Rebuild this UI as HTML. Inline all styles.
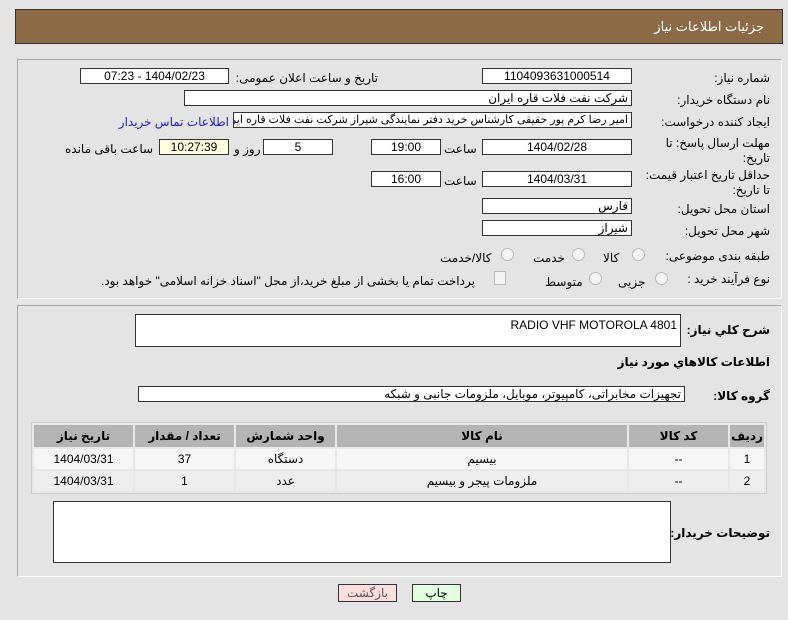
<!DOCTYPE html>
<html><head><meta charset="utf-8"><style>
body{margin:0;width:788px;height:620px;background:#e4e4e4;font-family:"Liberation Sans","DejaVu Sans",sans-serif;font-size:12px;position:relative;overflow:hidden;color:#000}
.a{position:absolute}
.hdr{left:15px;top:9px;width:766px;height:33px;background:#8b6a44;border:1px solid #333}
.hdr span{position:absolute;right:18px;top:9px;color:#fff;font-size:13px}
.pn{border:1px solid #aaa;border-right-color:#fff;border-bottom-color:#fff}
.bx{background:#fff;border:1px solid #333;height:16px;line-height:15px;direction:rtl;text-align:center;box-sizing:border-box;font-size:12px;overflow:hidden;white-space:nowrap}
.l{direction:rtl;text-align:right;white-space:nowrap;font-size:12px}
.rd{width:11px;height:11px;border-radius:50%;border:1px solid #bbb;background:#f4f4f4}
table{border-collapse:separate;border-spacing:2px;background:#e8e8e8;border:1px solid #ccc;direction:rtl}
td,th{padding:0;text-align:center;font-size:12px}
th{background:#b4b4b4;font-weight:bold;height:22px}
td{height:20px}
tr.r1 td{background:#f6f6f6}tr.r2 td{background:#eeeeee}
.btn{border:1px solid #333;height:18px;box-sizing:border-box;text-align:center;line-height:16px;font-size:12px}
.b{font-weight:bold;font-size:12px}
</style></head><body>
<div class="a hdr"><span>جزئیات اطلاعات نیاز</span></div>
<div class="a pn" style="left:17px;top:59px;width:763px;height:238px"></div>
<div class="a l" style="right:18px;top:71px">شماره نیاز:</div>
<div class="a bx" style="left:482px;top:68px;width:150px">1104093631000514</div>
<div class="a l" style="right:410px;top:71px">تاریخ و ساعت اعلان عمومی:</div>
<div class="a bx" style="left:80px;top:68px;width:149px">1404/02/23 - 07:23</div>
<div class="a l" style="right:18px;top:93px">نام دستگاه خریدار:</div>
<div class="a bx" style="left:184px;top:90px;width:448px;text-align:right;padding-right:3px">شرکت نفت فلات قاره ایران</div>
<div class="a l" style="right:18px;top:115px">ایجاد کننده درخواست:</div>
<div class="a bx" style="left:233px;top:112px;width:399px;text-align:right;padding-right:3px;font-size:11px">امیر رضا کرم پور حقیقی کارشناس خرید دفتر نمایندگی شیراز شرکت نفت فلات قاره ایران</div>
<div class="a l" style="right:559px;top:115px;color:#2222cc">اطلاعات تماس خریدار</div>
<div class="a l" style="right:18px;top:136px;line-height:15px">مهلت ارسال پاسخ: تا<br>تاریخ:</div>
<div class="a bx" style="left:482px;top:139px;width:150px">1404/02/28</div>
<div class="a l" style="left:444px;top:142px">ساعت</div>
<div class="a bx" style="left:371px;top:139px;width:70px">19:00</div>
<div class="a bx" style="left:263px;top:139px;width:70px">5</div>
<div class="a l" style="left:234px;top:142px">روز و</div>
<div class="a bx" style="left:159px;top:139px;width:70px;background:#ffffe0">10:27:39</div>
<div class="a l" style="left:65px;top:142px">ساعت باقی مانده</div>
<div class="a l" style="right:18px;top:168px;line-height:15px">حداقل تاریخ اعتبار قیمت:<br>تا تاریخ:</div>
<div class="a bx" style="left:482px;top:171px;width:150px">1404/03/31</div>
<div class="a l" style="left:444px;top:174px">ساعت</div>
<div class="a bx" style="left:371px;top:171px;width:70px">16:00</div>
<div class="a l" style="right:18px;top:202px">استان محل تحویل:</div>
<div class="a bx" style="left:482px;top:198px;width:150px;text-align:right;padding-right:3px">فارس</div>
<div class="a l" style="right:18px;top:224px">شهر محل تحویل:</div>
<div class="a bx" style="left:482px;top:220px;width:150px;text-align:right;padding-right:3px">شیراز</div>
<div class="a l" style="right:18px;top:249px">طبقه بندی موضوعی:</div>
<div class="a rd" style="left:632px;top:248px"></div><div class="a l" style="left:603px;top:251px">کالا</div>
<div class="a rd" style="left:572px;top:248px"></div><div class="a l" style="left:533px;top:251px">خدمت</div>
<div class="a rd" style="left:501px;top:248px"></div><div class="a l" style="left:440px;top:251px">کالا/خدمت</div>
<div class="a l" style="right:18px;top:272px">نوع فرآیند خرید :</div>
<div class="a rd" style="left:655px;top:272px"></div><div class="a l" style="left:618px;top:275px">جزیی</div>
<div class="a rd" style="left:589px;top:272px"></div><div class="a l" style="left:545px;top:275px">متوسط</div>
<div class="a" style="left:494px;top:271px;width:10px;height:12px;border:1px solid #bbb;background:#f4f4f4"></div>
<div class="a l" style="left:101px;top:274px">پرداخت تمام یا بخشی از مبلغ خرید،از محل "اسناد خزانه اسلامی" خواهد بود.</div>

<div class="a pn" style="left:17px;top:305px;width:763px;height:270px"></div>
<div class="a l b" style="right:18px;top:323px">شرح کلي نياز:</div>
<div class="a" style="left:135px;top:314px;width:546px;height:33px;background:#fff;border:1px solid #333;box-sizing:border-box;direction:ltr;text-align:right;padding:3px 3px;font-size:12px">RADIO VHF MOTOROLA 4801</div>
<div class="a l b" style="right:18px;top:355px">اطلاعات کالاهاي مورد نياز</div>
<div class="a l b" style="right:18px;top:389px">گروه کالا:</div>
<div class="a bx" style="left:138px;top:386px;width:547px;text-align:right;padding-right:3px">تجهیزات مخابراتی، کامپیوتر، موبایل، ملزومات جانبی و شبکه</div>
<table class="a" style="left:31px;top:422px;width:736px">
<tr><th style="width:34px">ردیف</th><th style="width:99px">کد کالا</th><th>نام کالا</th><th style="width:99px">واحد شمارش</th><th style="width:99px">تعداد / مقدار</th><th style="width:99px">تاریخ نیاز</th></tr>
<tr class="r1"><td>1</td><td>--</td><td>بیسیم</td><td>دستگاه</td><td>37</td><td>1404/03/31</td></tr>
<tr class="r2"><td>2</td><td>--</td><td>ملزومات پیجر و بیسیم</td><td>عدد</td><td>1</td><td>1404/03/31</td></tr>
</table>
<div class="a l b" style="right:18px;top:526px">توضیحات خریدار:</div>
<div class="a" style="left:53px;top:501px;width:618px;height:62px;background:#fff;border:1px solid #333;box-sizing:border-box"></div>
<div class="a btn" style="left:338px;top:584px;width:59px;background:#ffdede;color:#555">بازگشت</div>
<div class="a btn" style="left:412px;top:584px;width:49px;background:#e2ffe0">چاپ</div>
</body></html>
